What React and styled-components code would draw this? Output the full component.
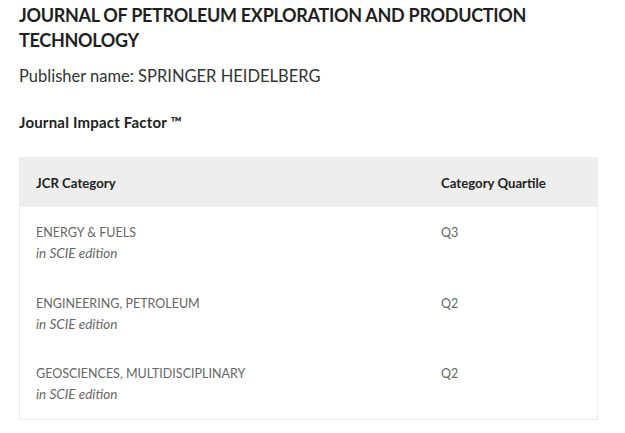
import React from 'react'
import styled, { createGlobalStyle } from 'styled-components'

const GlobalStyle = createGlobalStyle`
  body {
    margin: 0;
    background: #fff;
    font-family: Lato, "Noto Sans", sans-serif;
  }
`

const rows = [
  { category: 'ENERGY & FUELS', edition: 'in SCIE edition', quartile: 'Q3' },
  { category: 'ENGINEERING, PETROLEUM', edition: 'in SCIE edition', quartile: 'Q2' },
  { category: 'GEOSCIENCES, MULTIDISCIPLINARY', edition: 'in SCIE edition', quartile: 'Q2' },
]

const App = () => (
  <>
    <GlobalStyle />
    <Page>
      <Title>JOURNAL OF PETROLEUM EXPLORATION AND PRODUCTION TECHNOLOGY</Title>
      <Publisher>Publisher name: SPRINGER HEIDELBERG</Publisher>
      <Section>Journal Impact Factor ™</Section>
      <Table>
        <HeadRow>
          <HeadCell>JCR Category</HeadCell>
          <HeadCell>Category Quartile</HeadCell>
        </HeadRow>
        {rows.map((r) => (
          <Row key={r.category}>
            <Cell>
              <Category>{r.category}</Category>
              <Edition>{r.edition}</Edition>
            </Cell>
            <Cell>
              <Category>{r.quartile}</Category>
            </Cell>
          </Row>
        ))}
      </Table>
    </Page>
  </>
)

export default App

const Page = styled.div`
  padding: 3px 27px 0 19px;
  width: 579px;
`
const Title = styled.h1`
  margin: 0;
  font-size: 18px;
  line-height: 25px;
  font-weight: 700;
  letter-spacing: -0.3px;
  color: #1f1f1f;
  max-width: 540px;
`
const Publisher = styled.div`
  margin-top: 12px;
  font-size: 16.5px;
  line-height: 22px;
  color: #333;
`
const Section = styled.div`
  margin-top: 25px;
  font-size: 15px;
  line-height: 20px;
  font-weight: 700;
  letter-spacing: 0.2px;
  color: #222;
`
const Table = styled.div`
  margin-top: 25px;
  border: 1px solid #ebebeb;
  border-top: none;
`
const HeadRow = styled.div`
  display: grid;
  grid-template-columns: 405px 1fr;
  background: #eeeeee;
  height: 50px;
  box-sizing: border-box;
  padding-top: 16px;
`
const HeadCell = styled.div`
  padding: 0 16px;
  font-size: 13.2px;
  line-height: 20px;
  font-weight: 700;
  color: #222;
`
const Row = styled.div`
  display: grid;
  grid-template-columns: 405px 1fr;
  height: 70.7px;
  box-sizing: border-box;
  padding-top: 16px;
`
const Cell = styled.div`
  padding: 0 16px;
`
const Category = styled.div`
  font-size: 12.5px;
  line-height: 20px;
  color: #666;
`
const Edition = styled.div`
  font-size: 13.5px;
  line-height: 20px;
  font-style: italic;
  color: #666;
`
